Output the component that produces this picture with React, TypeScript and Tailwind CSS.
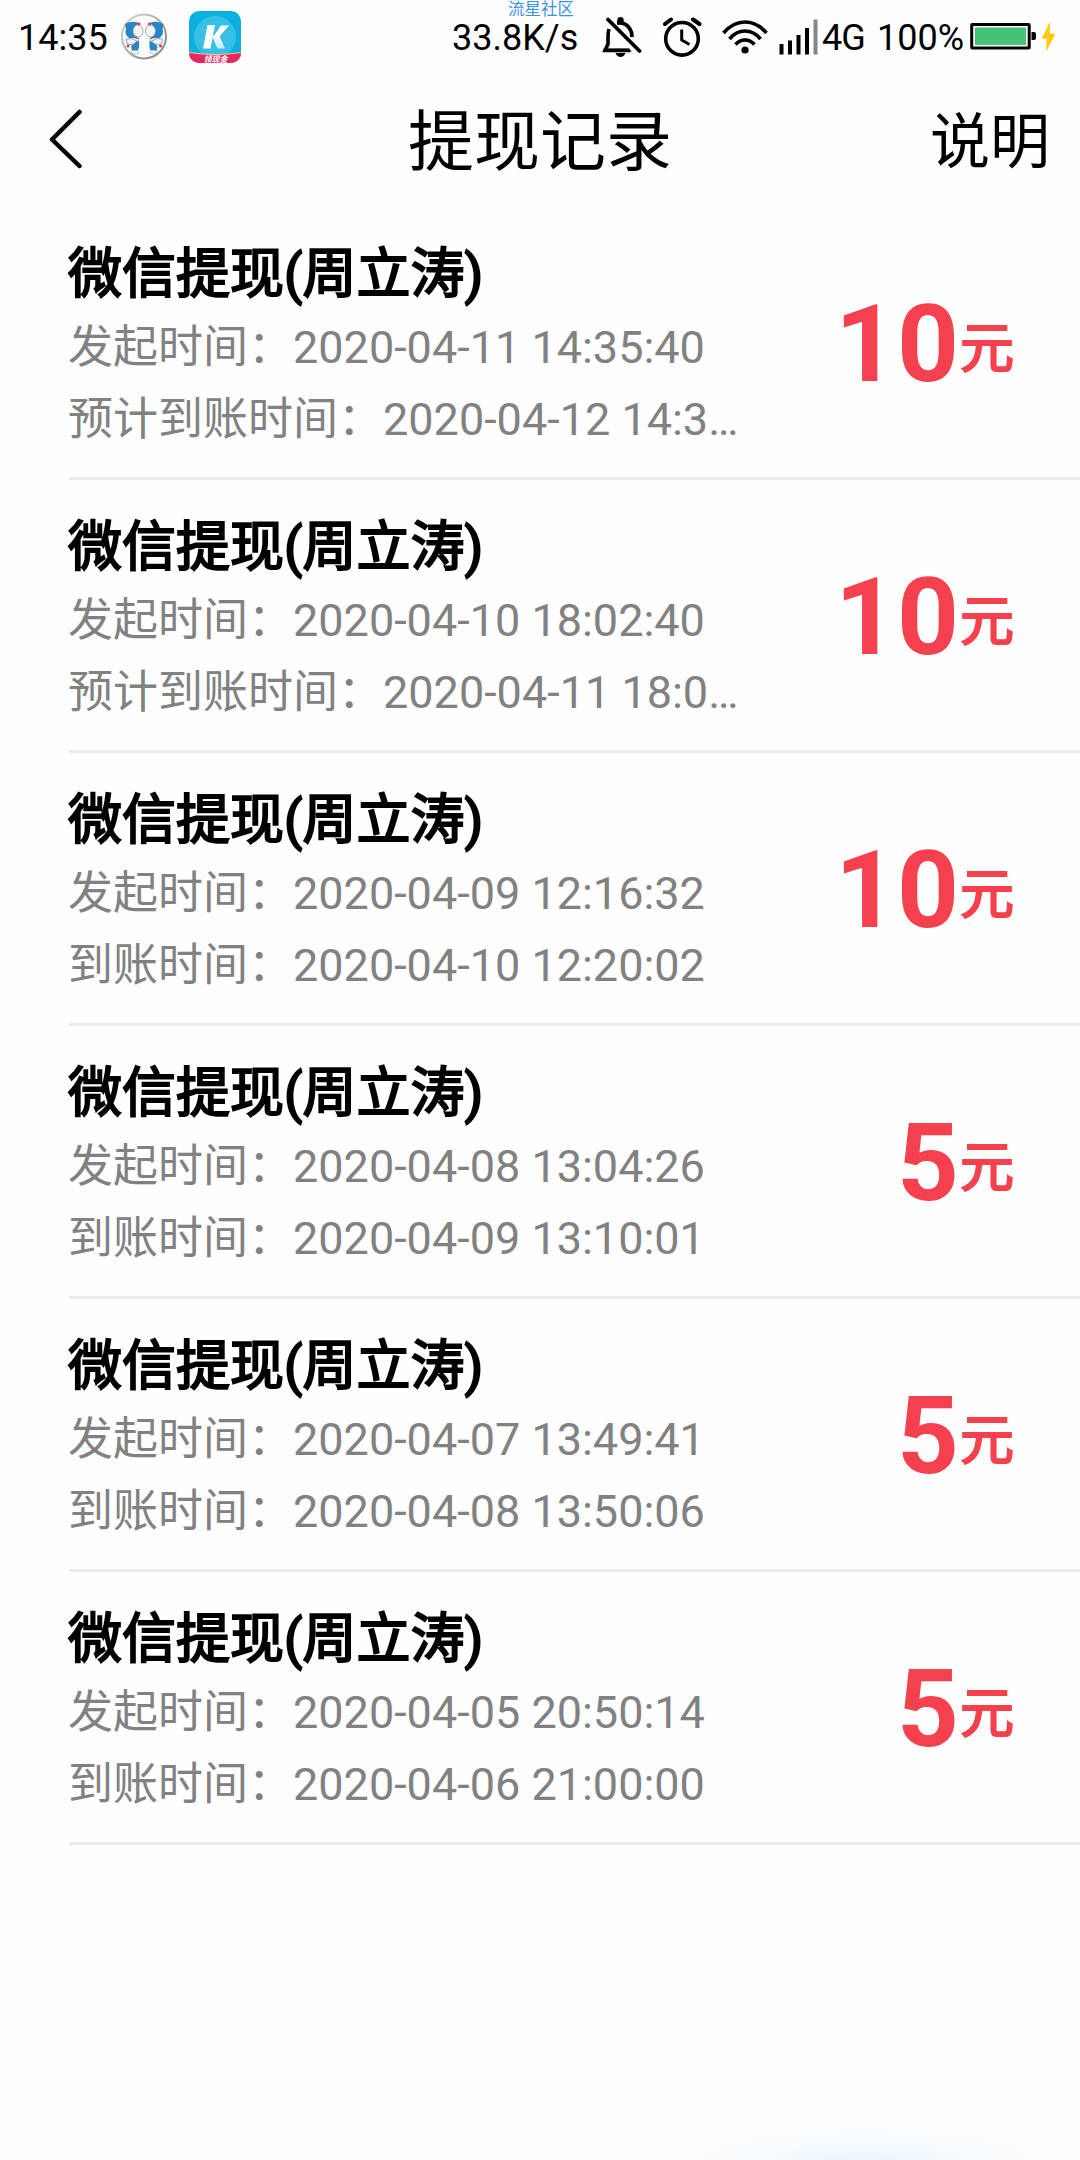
interface WithdrawRecord {
  id: number;
  title: string;
  startTime: string;
  arriveLabel: string;
  arriveTime: string;
  amount: number;
}

const records: WithdrawRecord[] = [
  { id: 1, title: "微信提现(周立涛)", startTime: "2020-04-11 14:35:40", arriveLabel: "预计到账时间：", arriveTime: "2020-04-12 14:3…", amount: 10 },
  { id: 2, title: "微信提现(周立涛)", startTime: "2020-04-10 18:02:40", arriveLabel: "预计到账时间：", arriveTime: "2020-04-11 18:0…", amount: 10 },
  { id: 3, title: "微信提现(周立涛)", startTime: "2020-04-09 12:16:32", arriveLabel: "到账时间：", arriveTime: "2020-04-10 12:20:02", amount: 10 },
  { id: 4, title: "微信提现(周立涛)", startTime: "2020-04-08 13:04:26", arriveLabel: "到账时间：", arriveTime: "2020-04-09 13:10:01", amount: 5 },
  { id: 5, title: "微信提现(周立涛)", startTime: "2020-04-07 13:49:41", arriveLabel: "到账时间：", arriveTime: "2020-04-08 13:50:06", amount: 5 },
  { id: 6, title: "微信提现(周立涛)", startTime: "2020-04-05 20:50:14", arriveLabel: "到账时间：", arriveTime: "2020-04-06 21:00:00", amount: 5 },
];

function AvatarIcon() {
  return (
    <svg className="ml-[12px] h-[50px] w-[50px] shrink-0" viewBox="0 0 50 50">
      <defs>
        <linearGradient id="ring" x1="0" y1="0" x2="1" y2="1">
          <stop offset="0" stopColor="#d8d8d8" />
          <stop offset="1" stopColor="#7d7d7d" />
        </linearGradient>
      </defs>
      <circle cx="25" cy="24.5" r="22" fill="#fff" stroke="url(#ring)" strokeWidth="2" />
      {[1, -1].map((dir) => (
        <g key={dir} transform={dir === 1 ? undefined : "translate(50.5 0) scale(-1 1)"}>
          <path d="M6 12 Q13 8 20 11 Q15 14 14 19 Q15 24 19 26 L10 26 Q5 22 7 17 Z" fill="#2487c4" />
          <path d="M12 34 L20 28 L20 36 Q18 41 13 39 Z" fill="#2487c4" />
          <ellipse cx="19" cy="19" rx="5" ry="6" fill="#f5f5f5" stroke="#8296a5" strokeWidth=".8" />
          <path d="M7 27 Q12 25 18 29 Q14 34 8 32 Z" fill="#eef2f5" stroke="#7693a8" strokeWidth=".8" />
          <path d="M14 25 L20 27" stroke="#b8404c" strokeWidth="1.3" />
          <circle cx="20" cy="12" r="1.5" fill="#d33c49" />
          <circle cx="9" cy="34" r="1.5" fill="#d33c49" />
          <ellipse cx="16" cy="40" rx="4" ry="1.8" fill="#fff" stroke="#8aa6b8" strokeWidth=".7" />
        </g>
      ))}
    </svg>
  );
}

function KAppIcon() {
  return (
    <svg className="ml-[20px] h-[52px] w-[52px] shrink-0" viewBox="0 0 52 52">
      <defs>
        <clipPath id="k-clip">
          <rect width="52" height="52" rx="10" />
        </clipPath>
        <linearGradient id="k-leg" x1="0" y1="0" x2="0" y2="1">
          <stop offset="0" stopColor="#fff" />
          <stop offset="1" stopColor="#b9e9f8" />
        </linearGradient>
      </defs>
      <g clipPath="url(#k-clip)">
        <rect width="52" height="52" fill="#0bb0de" />
        <circle cx="26" cy="26" r="21" fill="#36c0e6" />
        <path d="M18.5 14 H26 L21.5 37.5 H14 Z" fill="#fff" />
        <path d="M24 26 L32 14.5 H40 L30 26 Z" fill="#fff" />
        <path d="M23 25 L30 24 L36 37.5 H28.5 Z" fill="url(#k-leg)" />
        <path d="M0 41.5 Q26 45.5 52 41.5 V52 H0 Z" fill="#ea2560" />
        <path d="M0 41.5 Q26 45.5 52 41.5" fill="none" stroke="#f3cf8a" strokeWidth="1.2" />
      </g>
      <text x="26.5" y="50.5" textAnchor="middle" fill="#fff" className="font-['Noto_Sans_CJK_SC',sans-serif] text-[8px] font-bold italic">
        领现金
      </text>
    </svg>
  );
}

function BellOffIcon() {
  return (
    <svg className="ml-[24px] h-[40px] w-[40px] shrink-0" viewBox="0 0 40 40">
      <path d="M7 12 Q6 15 6 20 V27 L3 33.5 H28" fill="none" stroke="#000" strokeWidth="3.6" />
      <path d="M1.5 31.5 H26.5 L30 34.5 H1.5 Z" fill="#000" />
      <path d="M15 6 Q24 5 28 12 Q30 15 30 20" fill="none" stroke="#000" strokeWidth="3.8" />
      <circle cx="18.5" cy="3.2" r="3.2" fill="#000" />
      <path d="M13.5 36 H23.5 Q22 40 18.5 40 Q15 40 13.5 36 Z" fill="#000" />
      <path d="M6 2.5 L37.5 34" stroke="#000" strokeWidth="3.8" strokeLinecap="round" />
    </svg>
  );
}

function AlarmIcon() {
  return (
    <svg className="ml-[20px] h-[40px] w-[40px] shrink-0" viewBox="0 0 40 40" fill="none" stroke="#000">
      <circle cx="20" cy="21.8" r="16.3" strokeWidth="3.6" />
      <path d="M19.7 12.5 V23 L27.5 27.5" strokeWidth="3" />
      <path d="M3 7 L9 2.5 M31 2.5 L37.5 7" strokeWidth="4" strokeLinecap="round" />
    </svg>
  );
}

function WifiIcon() {
  return (
    <svg className="ml-[20px] h-[36px] w-[46px] shrink-0" viewBox="0 0 46 36" fill="none" stroke="#000" strokeWidth="3.7">
      <path d="M1.5 14 Q11 3 23 3 Q35 3 44.5 14" />
      <path d="M7.5 20 Q14 12 23 12 Q32 12 38.5 20" />
      <path d="M13.5 25.5 Q17.5 21 23 21 Q28.5 21 32.5 25.5" />
      <circle cx="23" cy="31" r="3.6" fill="#000" stroke="none" />
    </svg>
  );
}

function SignalIcon() {
  return (
    <svg className="ml-[11px] h-[36px] w-[40px] shrink-0" viewBox="0 0 40 36">
      <rect x="0.5" y="25" width="4" height="10.5" />
      <rect x="9" y="21.5" width="4" height="14" />
      <rect x="17.5" y="16" width="4" height="19.5" />
      <rect x="26" y="9" width="4" height="26.5" />
      <rect x="34.5" y="0.5" width="4" height="35" fill="#858585" />
    </svg>
  );
}

function BatteryIcon() {
  return (
    <svg className="ml-[7px] h-[30px] w-[88px] shrink-0" viewBox="0 0 88 30">
      <rect x="2.7" y="2.5" width="57.5" height="23.5" rx="0.5" fill="#fff" stroke="#000" strokeWidth="3" />
      <rect x="6" y="5.5" width="51" height="17.5" fill="#44c275" />
      <path d="M62.5 10 H65 Q67 10 67 12 V16 Q67 18 65 18 H62.5 Z" />
      <path d="M81 0.5 L73 16.5 H78 L77.5 28.5 L86 12 H80.5 Z" fill="#ffc90c" stroke="#ffc90c" strokeWidth="0.6" />
    </svg>
  );
}

function StatusBar() {
  return (
    <div className="relative flex h-[74px] items-center pl-[18px] font-[Roboto,sans-serif] text-[36px] leading-none text-black">
      <span className="w-[89px] pt-[2px]">14:35</span>
      <AvatarIcon />
      <KAppIcon />
      <span className="ml-[211px] w-[126px] pt-[2px]">33.8K/s</span>
      <BellOffIcon />
      <AlarmIcon />
      <WifiIcon />
      <SignalIcon />
      <span className="ml-[3px] w-[46px] pt-[2px] tracking-[-1px]">4G</span>
      <span className="ml-[9px] w-[85px] pt-[2px]">100%</span>
      <BatteryIcon />
      <span className="absolute left-[508px] top-0 font-['Noto_Sans_CJK_SC',sans-serif] text-[16.5px] leading-[17px] text-[#3d93ea]">
        流星社区
      </span>
    </div>
  );
}

function NavBar() {
  return (
    <div className="grid h-[133px] grid-cols-[1fr_auto_1fr] items-center text-black">
      <svg className="mb-[3px] ml-[48px] h-[60px] w-[36px]" viewBox="0 0 36 60" fill="none" stroke="#000" strokeWidth="4.5" strokeLinecap="round" strokeLinejoin="round">
        <path d="M31.5 3 L4 30.5 L31.5 57" />
      </svg>
      <h1 className="pt-[4px] text-[66px] leading-none">提现记录</h1>
      <button className="justify-self-end pt-[4px] pr-[30px] text-[60px] leading-none">说明</button>
    </div>
  );
}

function RecordItem({ record }: { record: WithdrawRecord }) {
  return (
    <li className="ml-[69px] flex h-[273px] justify-between border-b-[3px] border-[#ebebeb] pr-[66px]">
      <div className="-ml-px pt-[32px]">
        <h2 className="mb-px text-[54px] leading-[72px] text-black [-webkit-text-stroke:2px_black]">{record.title}</h2>
        <p className="text-[45px] leading-[72px] text-[#818181]">
          发起时间：{record.startTime}
        </p>
        <p className="text-[45px] leading-[72px] text-[#818181]">
          {record.arriveLabel}
          {record.arriveTime}
        </p>
      </div>
      <div className="flex items-center pt-[3px] text-[#f5414d]">
        <span className="-ml-px mr-px font-[Roboto,sans-serif] text-[108px] font-bold leading-none">{record.amount}</span>
        <span className="pt-[12px] text-[54px] leading-none [-webkit-text-stroke:2px_#f5414d]">元</span>
      </div>
    </li>
  );
}

export default function App() {
  return (
    <div className="flex h-[2160px] w-[1080px] flex-col overflow-hidden bg-[#fefefe] font-[Roboto,'Noto_Sans_CJK_SC',sans-serif]">
      <StatusBar />
      <NavBar />
      <ul>
        {records.map((record) => (
          <RecordItem key={record.id} record={record} />
        ))}
      </ul>
      <div className="ml-[645px] mt-auto h-[38px] w-[440px] bg-[radial-gradient(ellipse_220px_38px_at_50%_100%,#eaf5fe,#f6fbff_45%,#fefefe)]" />
    </div>
  );
}
